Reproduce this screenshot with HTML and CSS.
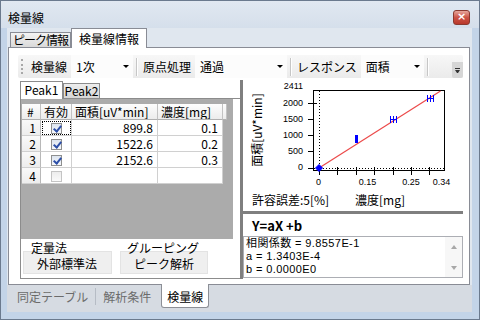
FILE: index.html
```html
<!DOCTYPE html>
<html lang="ja">
<head>
    <meta charset="UTF-8">
    <meta name="viewport" content="width=device-width, initial-scale=1.0">
    <title>検量線</title>
    <link rel="stylesheet" href="styles.css">
</head>
<body>
<div class="window">
    <!-- Barre de titre -->
    <div class="titlebar">
        <span class="title">検量線</span>
        <span class="close-btn">×</span>
    </div>

    <div class="client">
        <div class="top-tabs">
            <div class="tab">ピーク情報</div>
            <div class="tab active">検量線情報</div>
        </div>

        <div class="page">
            <!-- Barre d'outils -->
            <div class="toolbar">
                <span class="grip"></span>
                <span class="tb-label">検量線</span>
                <span class="combo combo-order">1次<i class="arrow"></i></span>
                <span class="tb-sep"></span>
                <span class="tb-label">原点処理</span>
                <span class="combo combo-origin">通過<i class="arrow"></i></span>
                <span class="tb-sep"></span>
                <span class="tb-label">レスポンス</span>
                <span class="combo combo-resp">面積<i class="arrow"></i></span>
                <span class="tb-sep"></span>
                <span class="tb-overflow"><i></i></span>
            </div>

            <div class="split">
                <!-- Tableau des pics -->
                <div class="left-pane">
                    <div class="peak-tabs">
                        <div class="ptab active">Peak1</div>
                        <div class="ptab">Peak2</div>
                    </div>
                    <div class="peak-panel">
                        <div class="grid-area">
                            <table class="grid">
                                <colgroup>
                                    <col class="c-num"><col class="c-chk"><col class="c-area"><col class="c-conc"><col class="c-end">
                                </colgroup>
                                <thead>
                                    <tr>
                                        <th class="num">#</th>
                                        <th>有効</th>
                                        <th>面積[uV*min]</th>
                                        <th>濃度[mg]</th>
                                        <th></th>
                                    </tr>
                                </thead>
                                <tbody>
                                    <tr>
                                        <td class="rowhead">1</td>
                                        <td class="chk focus"><span class="checkbox checked"></span></td>
                                        <td class="val">899.8</td>
                                        <td class="val">0.1</td>
                                    </tr>
                                    <tr>
                                        <td class="rowhead">2</td>
                                        <td class="chk"><span class="checkbox checked"></span></td>
                                        <td class="val">1522.6</td>
                                        <td class="val">0.2</td>
                                    </tr>
                                    <tr>
                                        <td class="rowhead">3</td>
                                        <td class="chk"><span class="checkbox checked"></span></td>
                                        <td class="val">2152.6</td>
                                        <td class="val">0.3</td>
                                    </tr>
                                    <tr>
                                        <td class="rowhead">4</td>
                                        <td class="chk"><span class="checkbox"></span></td>
                                        <td class="val"></td>
                                        <td class="val"></td>
                                    </tr>
                                </tbody>
                            </table>
                        </div>
                        <div class="groups">
                            <div class="group g-method">
                                <div class="group-label">定量法</div>
                                <div class="group-box">外部標準法</div>
                            </div>
                            <div class="group g-grouping">
                                <div class="group-label">グルーピング</div>
                                <div class="group-box">ピーク解析</div>
                            </div>
                        </div>
                    </div>
                </div>

                <div class="vsplit"></div>

                <!-- Courbe d'étalonnage -->
                <div class="right-pane">
                    <div class="chart">
                        <svg width="220" height="111" viewBox="0 0 220 111">
                            <rect x="70.5" y="10.5" width="131" height="80" fill="#fff" stroke="#000"/>
                            <line x1="76.5" y1="11" x2="76.5" y2="90" stroke="#000" stroke-dasharray="1 2"/>
                            <line x1="71" y1="88.5" x2="201" y2="88.5" stroke="#000" stroke-dasharray="1 2"/>
                            <g stroke="#000">
                                <line x1="65" y1="23.5" x2="74" y2="23.5"/>
                                <line x1="65" y1="39.5" x2="71" y2="39.5"/>
                                <line x1="65" y1="55.5" x2="71" y2="55.5"/>
                                <line x1="65" y1="71.5" x2="71" y2="71.5"/>
                                <line x1="65" y1="88.5" x2="71" y2="88.5"/>
                                <line x1="76.5" y1="87" x2="76.5" y2="95"/>
                                <line x1="94.5" y1="87" x2="94.5" y2="95"/>
                                <line x1="113.5" y1="87" x2="113.5" y2="95"/>
                                <line x1="131.5" y1="87" x2="131.5" y2="95"/>
                                <line x1="150.5" y1="87" x2="150.5" y2="95"/>
                                <line x1="168.5" y1="87" x2="168.5" y2="95"/>
                                <line x1="186.5" y1="87" x2="186.5" y2="95"/>
                            </g>
                            <line x1="76" y1="88" x2="197.5" y2="11" stroke="#ec4a4a" stroke-width="1.2"/>
                            <g stroke="#0000ff" fill="none">
                                <polygon points="76,84.5 79.5,88 76,91.5 72.5,88" fill="#0000ff"/>
                                <rect x="112" y="55" width="3" height="8" fill="#0000ff" stroke="none"/>
                                <path d="M147.5 36v7M150.5 36v7M153.5 36v7M147.5 39.5h6"/>
                                <path d="M184.5 15v7M187.5 15v7M190.5 15v7M184.5 18.5h6"/>
                            </g>
                            <g class="tick-label" text-anchor="end">
                                <text x="60" y="9">2411</text>
                                <text x="60" y="26">2000</text>
                                <text x="60" y="42">1500</text>
                                <text x="60" y="58">1000</text>
                                <text x="60" y="74">500</text>
                                <text x="60" y="90">0</text>
                            </g>
                            <g class="tick-label" text-anchor="middle">
                                <text x="75.5" y="105">0</text>
                                <text x="124.5" y="105">0.15</text>
                                <text x="168" y="105">0.25</text>
                                <text x="198.5" y="105">0.34</text>
                            </g>
                            <text class="axis-title" transform="translate(19 50) rotate(-90)" text-anchor="middle">面積[uV*min]</text>
                        </svg>
                        <div class="chart-foot">
                            <span class="tolerance">許容誤差:5[%]</span>
                            <span>濃度[mg]</span>
                        </div>
                    </div>
                    <div class="hsplit"></div>
                    <div class="formula">Y=aX +b</div>
                    <div class="result">
                        <div class="result-text">
                            <div>相関係数 = 9.8557E-1</div>
                            <div>a = 1.3403E-4</div>
                            <div>b = 0.0000E0</div>
                        </div>
                        <div class="vscroll"><i class="up"></i><i class="down"></i></div>
                    </div>
                </div>
            </div>
        </div>

        <div class="bottom-tabs">
            <div class="btab">同定テーブル</div>
            <span class="btab-sep"></span>
            <div class="btab">解析条件</div>
            <div class="btab active">検量線</div>
        </div>
    </div>
</div>
</body>
</html>
```

FILE: styles.css
```css
* {
    box-sizing: border-box;
}

body {
    margin: 0;
    width: 480px;
    height: 320px;
    overflow: hidden;
    font-family: "Noto Sans CJK JP", sans-serif;
    font-size: 12px;
    line-height: 14px;
    color: #000;
}

.window {
    width: 480px;
    height: 320px;
    display: flex;
    flex-direction: column;
    background: #c3d4e8;
    border: 1px solid #6b7a8e;
}

/* Barre de titre */
.titlebar {
    height: 27px;
    padding: 6px 9px 0 7px;
    display: flex;
    align-items: center;
    background: linear-gradient(#e1e8f1, #d5dfeb);
    flex-shrink: 0;
}

.close-btn {
    margin-left: auto;
    width: 17px;
    height: 15px;
    border: 1px solid #8a3a30;
    border-radius: 3px;
    background: linear-gradient(#e6a79c, #cc5446 50%, #b9382b);
    color: #fff;
    font-family: "DejaVu Sans", sans-serif;
    font-size: 11px;
    font-weight: bold;
    line-height: 12px;
    text-align: center;
}

.client {
    flex: 1;
    margin: 0 7px 7px 6px;
    display: flex;
    flex-direction: column;
    background: #e0e7ef;
}

/* Onglets du haut */
.top-tabs {
    height: 19px;
    padding-left: 3px;
    display: flex;
    align-items: flex-end;
}

.tab {
    width: 61px;
    height: 15px;
    border: 1px solid #898c95;
    border-bottom: none;
    background: linear-gradient(#f3f3f3, #d9d9d9);
    text-align: center;
    line-height: 13px;
    letter-spacing: -1px;
    white-space: nowrap;
}

.tab.active {
    width: 76px;
    height: 20px;
    margin-bottom: -1px;
    background: #fff;
    position: relative;
    z-index: 1;
    line-height: 19px;
    letter-spacing: 0;
}

.page {
    height: 238px;
    margin: 0 2px 0 1px;
    padding: 7px 6px 5px 9px;
    border: 1px solid #898c95;
    background: #fff;
    display: flex;
    flex-direction: column;
}

/* Barre d'outils */
.toolbar {
    height: 23px;
    display: flex;
    align-items: center;
    background: linear-gradient(#f7f7f7, #ebebeb);
    border-radius: 2px;
}

.grip {
    width: 2px;
    height: 15px;
    margin: 0 6px 0 3px;
    border-left: 2px dotted #a8a8a8;
}

.tb-label {
    padding: 0 4px 0 2px;
}

.combo {
    height: 23px;
    padding: 0 4px 0 5px;
    display: flex;
    align-items: center;
    background: #fcfcfc;
}

.combo-order { width: 62px; }
.combo-origin { width: 92px; }
.combo-resp { width: 63px; }

.arrow {
    margin-left: auto;
    border-left: 3px solid transparent;
    border-right: 3px solid transparent;
    border-top: 3px solid #000;
}

.tb-sep {
    width: 2px;
    height: 18px;
    margin: 0 3px;
    border-left: 1px solid #c6c6c6;
    border-right: 1px solid #fff;
}

.tb-overflow {
    margin-left: auto;
    align-self: flex-end;
    width: 11px;
    height: 16px;
    background: #d6d6d6;
    border-radius: 0 0 2px 2px;
    display: flex;
    justify-content: center;
    padding-top: 6px;
}

.tb-overflow i {
    width: 5px;
    height: 5px;
    border-top: 1px solid #333;
}

.tb-overflow i::after {
    content: "";
    display: block;
    margin-top: 1px;
    border-left: 2.5px solid transparent;
    border-right: 2.5px solid transparent;
    border-top: 3px solid #333;
}

.split {
    flex: 1;
    margin: 2px 0 0 2px;
    display: flex;
}

/* Panneau gauche */
.left-pane {
    width: 220px;
    display: flex;
    flex-direction: column;
}

.peak-tabs {
    height: 18px;
    display: flex;
    align-items: flex-end;
}

.ptab {
    width: 37px;
    height: 15px;
    border: 1px solid #8c8c8c;
    border-bottom: none;
    background: linear-gradient(#ededed, #d6d6d6);
    text-align: center;
    line-height: 13px;
}

.ptab.active {
    width: 43px;
    height: 18px;
    margin-bottom: -1px;
    background: #fff;
    position: relative;
    z-index: 1;
    line-height: 16px;
}

.peak-panel {
    flex: 1;
    border: 1px solid #8c8c8c;
    border-right: none;
    display: flex;
    flex-direction: column;
}

.grid-area {
    height: 140px;
    margin-right: 7px;
    padding: 5px 0 0 1px;
    background: #ababab;
}

.grid {
    table-layout: fixed;
    width: 205px;
    border-collapse: separate;
    border-spacing: 0;
}

.c-num { width: 19px; }
.c-chk { width: 31px; }
.c-area { width: 86px; }
.c-conc { width: 65px; }
.c-end { width: 4px; }

.grid th,
.grid td {
    height: 16px;
    padding: 0;
    border-right: 1px solid #d0d0d0;
    border-bottom: 1px solid #d0d0d0;
    white-space: nowrap;
    overflow: hidden;
    line-height: 15px;
}

.grid th {
    font-weight: normal;
    text-align: left;
    padding-left: 3px;
    background: linear-gradient(#fdfdfd, #ececec);
    border-right-color: #c2c2c2;
    border-bottom-color: #b0b0b0;
}

.grid th.num {
    padding-left: 5px;
}

.grid td {
    background: #fff;
}

.grid td.rowhead {
    text-align: right;
    padding-right: 4px;
    background: linear-gradient(#f9f9f9, #ededed);
    border-right-color: #b8b8b8;
}

.grid td.val {
    text-align: right;
    padding-right: 4px;
}

.grid td.chk {
    text-align: center;
}

.grid td.focus {
    outline: 1px dotted #000;
    outline-offset: -2px;
}

.checkbox {
    display: inline-block;
    vertical-align: middle;
    width: 11px;
    height: 11px;
    margin-top: -2px;
    border: 1px solid #c4c4c4;
    background: linear-gradient(#ededed, #fafafa);
    position: relative;
}

.checkbox.checked {
    border-color: #8e8f8f;
    background: linear-gradient(#dce4ef, #f6f8fb);
}

.checkbox.checked::after {
    content: "";
    position: absolute;
    left: 3px;
    top: 0;
    width: 3px;
    height: 6px;
    border-right: 2px solid #2d4fa8;
    border-bottom: 2px solid #2d4fa8;
    transform: rotate(40deg);
}

.groups {
    flex: 1;
    padding: 3px 0 0 2px;
    display: flex;
    gap: 8px;
}

.group {
    display: flex;
    flex-direction: column;
}

.group-label {
    height: 9px;
    line-height: 12px;
    position: relative;
    z-index: 1;
}

.group-box {
    height: 23px;
    padding: 5px 0 0 13px;
    border: 1px solid #e3e3e3;
    background: #efefef;
    line-height: 13px;
}

.g-method { width: 89px; }
.g-method .group-label { margin-left: 8px; }
.g-grouping { width: 88px; }
.g-grouping .group-label { margin-left: 7px; }

.vsplit {
    width: 3px;
    background: #7f7f7f;
}

/* Panneau droit */
.right-pane {
    width: 220px;
    display: flex;
    flex-direction: column;
}

.chart {
    height: 131px;
}

.chart svg {
    display: block;
}

.tick-label {
    font-family: "Liberation Sans", sans-serif;
    font-size: 9px;
}

.axis-title {
    font-size: 12px;
}

.chart-foot {
    height: 20px;
    padding-left: 9px;
    display: flex;
    line-height: 17px;
}

.tolerance {
    width: 103px;
}

.hsplit {
    height: 3px;
    background: #7f7f7f;
}

.formula {
    height: 22px;
    padding: 1px 0 0 9px;
    display: flex;
    align-items: center;
    font-size: 13px;
    font-weight: bold;
}

.result {
    height: 42px;
    border: 1px solid #acaeb4;
    display: flex;
}

.result-text {
    flex: 1;
    padding: 0 0 0 2px;
    font-family: "Liberation Sans", "Noto Sans CJK JP", sans-serif;
    font-size: 11px;
    line-height: 13px;
    letter-spacing: 0.4px;
    white-space: nowrap;
}

.vscroll {
    width: 17px;
    background: #f7f7f7;
    display: flex;
    flex-direction: column;
    align-items: center;
    justify-content: space-between;
    padding: 8px 0 7px;
}

.vscroll .up {
    border-left: 3.5px solid transparent;
    border-right: 3.5px solid transparent;
    border-bottom: 4px solid #a8a8a8;
}

.vscroll .down {
    border-left: 3.5px solid transparent;
    border-right: 3.5px solid transparent;
    border-top: 4px solid #a8a8a8;
}

/* Onglets du bas */
.bottom-tabs {
    flex: 1;
    padding: 0 0 4px 3px;
    display: flex;
    align-items: flex-start;
    background: #d6dbe2;
}

.btab {
    height: 23px;
    padding: 0 7px;
    line-height: 23px;
    color: #6b6b6b;
}

.btab-sep {
    width: 1px;
    height: 17px;
    margin-top: 3px;
    background: #b6bcc5;
}

.btab.active {
    height: 24px;
    margin: -1px 0 0 3px;
    padding: 1px 5px 0;
    border: 1px solid #8c8f96;
    border-top: none;
    border-radius: 0 0 3px 3px;
    background: #fff;
    color: #000;
    position: relative;
    z-index: 1;
}
```
